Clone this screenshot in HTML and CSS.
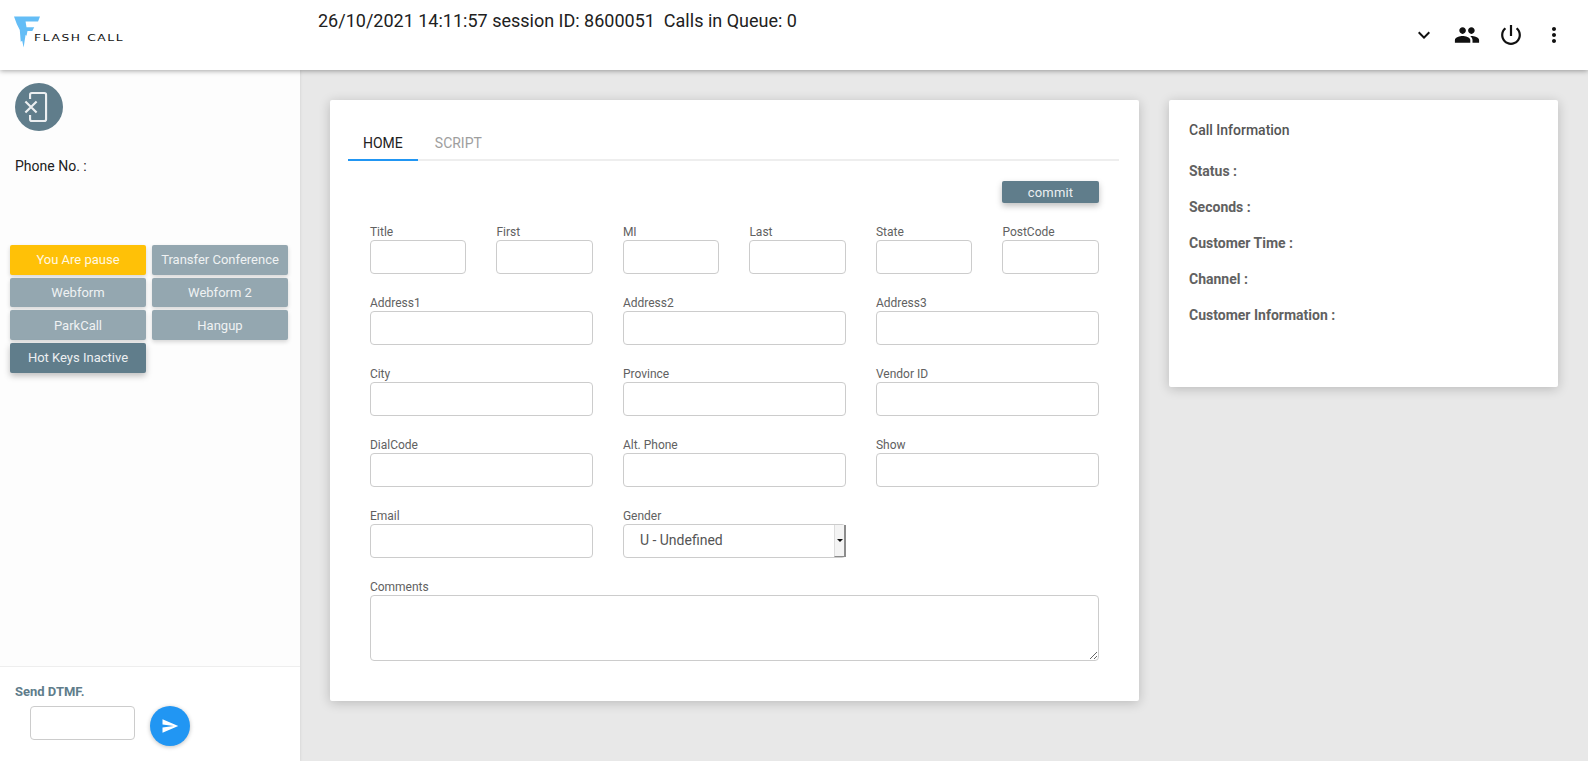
FILE: index.html
```html
<!DOCTYPE html>
<html lang="en">
<head>
<meta charset="utf-8">
<title>Flash Call</title>
<link rel="stylesheet" href="styles.css">
</head>
<body>
<header class="topbar">
  <div class="logo">
    <svg class="logo-mark" viewBox="0 0 27 32" aria-hidden="true"><path fill="#64bdf6" d="M0 0H27L25 5H12L13 11H21L19 15H14L13 20L12 19L10 32L8.500 25L7 26L6 14L3 8z"/></svg>
    <span class="logo-text">FLASH CALL</span>
  </div>
  <div class="status">26/10/2021 14:11:57 session ID: 8600051&nbsp; Calls in Queue: 0</div>
  <nav class="top-icons">
    <svg class="ico" viewBox="0 0 24 24"><path d="M16.590 8.590L12 13.170 7.410 8.590 6 10l6 6 6-6z"/></svg>
    <svg class="ico ico-big" viewBox="0 0 24 24"><path d="M16 11c1.660 0 2.990-1.340 2.990-3S17.660 5 16 5c-1.660 0-3 1.340-3 3s1.340 3 3 3zm-8 0c1.660 0 2.990-1.340 2.990-3S9.660 5 8 5C6.340 5 5 6.340 5 8s1.340 3 3 3zm0 2c-2.330 0-7 1.170-7 3.500V19h14v-2.500c0-2.330-4.670-3.500-7-3.500zm8 0c-.290 0-.620.020-.970.050 1.160.840 1.970 1.970 1.970 3.450V19h6v-2.500c0-2.330-4.670-3.500-7-3.500z"/></svg>
    <svg class="ico ico-big" viewBox="0 0 24 24"><path d="M13 3h-2v10h2V3zm4.830 2.170l-1.420 1.420C17.990 7.860 19 9.810 19 12c0 3.870-3.130 7-7 7s-7-3.130-7-7c0-2.190 1.010-4.140 2.580-5.420L6.170 5.170C4.230 6.820 3 9.260 3 12c0 4.970 4.030 9 9 9s9-4.030 9-9c0-2.740-1.230-5.180-3.170-6.830z"/></svg>
    <svg class="ico" viewBox="0 0 24 24"><path d="M12 8c1.100 0 2-.9 2-2s-.9-2-2-2-2 .9-2 2 .9 2 2 2zm0 2c-1.100 0-2 .9-2 2s.9 2 2 2 2-.9 2-2-.9-2-2-2zm0 6c-1.100 0-2 .9-2 2s.9 2 2 2 2-.9 2-2-.9-2-2-2z"/></svg>
  </nav>
</header>
<div class="layout">
  <aside class="sidebar">
    <div class="side-main">
      <div class="avatar">
        <svg viewBox="0 0 24 24"><path d="M8.300 6V2.800A1.300 1.300 0 0 1 9.600 1.500H19A1.300 1.300 0 0 1 20.300 2.800V21.200A1.300 1.300 0 0 1 19 22.500H9.600A1.300 1.300 0 0 1 8.300 21.200V18M4.800 7.800L13.200 16.200M13.200 7.800L4.800 16.200"/></svg>
      </div>
      <div class="phone">Phone No. :</div>
      <div class="actions">
        <button class="btn btn-amber">You Are pause</button>
        <button class="btn">Transfer Conference</button>
        <button class="btn">Webform</button>
        <button class="btn">Webform 2</button>
        <button class="btn">ParkCall</button>
        <button class="btn">Hangup</button>
        <button class="btn btn-dark">Hot Keys Inactive</button>
      </div>
    </div>
    <div class="side-foot">
      <div class="dtmf-title">Send DTMF.</div>
      <div class="dtmf-row">
        <input class="input dtmf-input" type="text">
        <button class="send" aria-label="Send">
          <svg viewBox="0 0 24 24"><path d="M2.010 21L23 12 2.010 3 2 10l15 2-15 2z"/></svg>
        </button>
      </div>
    </div>
  </aside>
  <main class="content">
    <section class="card card-form">
      <div class="tabs">
        <div class="tab tab-active">HOME</div>
        <div class="tab">SCRIPT</div>
      </div>
      <div class="commit-row"><button class="btn btn-dark btn-commit">commit</button></div>
      <form class="form">
        <label class="field s1"><span>Title</span><input class="input" type="text"></label>
        <label class="field s1"><span>First</span><input class="input" type="text"></label>
        <label class="field s1"><span>MI</span><input class="input" type="text"></label>
        <label class="field s1"><span>Last</span><input class="input" type="text"></label>
        <label class="field s1"><span>State</span><input class="input" type="text"></label>
        <label class="field s1"><span>PostCode</span><input class="input" type="text"></label>
        <label class="field s2"><span>Address1</span><input class="input" type="text"></label>
        <label class="field s2"><span>Address2</span><input class="input" type="text"></label>
        <label class="field s2"><span>Address3</span><input class="input" type="text"></label>
        <label class="field s2"><span>City</span><input class="input" type="text"></label>
        <label class="field s2"><span>Province</span><input class="input" type="text"></label>
        <label class="field s2"><span>Vendor ID</span><input class="input" type="text"></label>
        <label class="field s2"><span>DialCode</span><input class="input" type="text"></label>
        <label class="field s2"><span>Alt. Phone</span><input class="input" type="text"></label>
        <label class="field s2"><span>Show</span><input class="input" type="text"></label>
        <label class="field s2"><span>Email</span><input class="input" type="text"></label>
        <label class="field s2"><span>Gender</span>
          <span class="select-wrap">
            <select class="input select"><option>U - Undefined</option></select>
            <span class="select-btn"></span>
          </span>
        </label>
        <label class="field s6"><span>Comments</span><textarea class="input textarea"></textarea></label>
      </form>
    </section>
    <section class="card card-info">
      <h2 class="info-title">Call Information</h2>
      <div class="info-row">Status :</div>
      <div class="info-row">Seconds :</div>
      <div class="info-row">Customer Time :</div>
      <div class="info-row">Channel :</div>
      <div class="info-row">Customer Information :</div>
    </section>
  </main>
</div>
</body>
</html>
```
FILE: styles.css
```css
* { box-sizing: border-box; }
html, body { margin: 0; height: 100%; overflow: hidden; }
body {
  font-family: Roboto, "Liberation Sans", sans-serif;
  background: #e8e8e8;
  color: #212121;
  display: flex;
  flex-direction: column;
  height: 761px;
}
.topbar {
  height: 70px;
  flex: none;
  background: #fff;
  display: flex;
  position: relative;
  z-index: 2;
  box-shadow: 0 1px 5px rgba(0,0,0,.35);
}
.logo {
  width: 318px;
  flex: none;
  display: flex;
  align-items: flex-start;
  padding: 16px 0 0 14px;
}
.logo-mark { width: 26px; height: 32px; flex: none; }
.logo-text {
  margin: 17px 0 0 -6px;
  font-family: "DejaVu Sans", sans-serif;
  font-size: 9px;
  line-height: 11px;
  letter-spacing: 1.2px;
  color: #111;
  white-space: nowrap;
  transform: scaleX(1.36);
  transform-origin: left center;
}
.status {
  flex: 1;
  font-size: 18px;
  line-height: 21px;
  padding-top: 10px;
  color: #212121;
  white-space: pre;
}
.top-icons {
  display: flex;
  align-items: center;
  gap: 19.300px;
  padding: 0 22px 0 0;
  height: 70px;
}
.ico { width: 24px; height: 24px; fill: #111; display: block; }
.ico-big { transform: scale(1.1); }
.layout { flex: 1; display: flex; min-height: 0; }
.sidebar {
  width: 300px;
  flex: none;
  background: #fdfdfd;
  display: flex;
  flex-direction: column;
  box-shadow: 1px 0 2px rgba(0,0,0,.06);
}
.side-main { flex: 1; padding: 13px 10px 0; }
.avatar {
  width: 48px;
  height: 48px;
  margin-left: 5px;
  border-radius: 50%;
  background: #607d8b;
  display: flex;
  align-items: center;
  justify-content: center;
}
.avatar svg {
  width: 32px;
  height: 32px;
  margin-left: -8px;
  fill: none;
  stroke: #eceff1;
  stroke-width: 1.600;
}
.phone { margin: 27px 0 0 5px; font-size: 14px; line-height: 16px; color: #212121; }
.actions {
  margin-top: 71px;
  display: grid;
  grid-template-columns: 136px 136px;
  column-gap: 6px;
  row-gap: 3px;
  grid-auto-rows: 29.670px;
}
.btn {
  border: 0;
  border-radius: 2px;
  background: #94a7b0;
  color: #eff2f3;
  font-family: inherit;
  font-size: 13px;
  padding: 0;
  white-space: nowrap;
  box-shadow: 0 2px 4px rgba(0,0,0,.16);
}
.btn-amber { background: #ffc107; color: #fff8e1; }
.btn-dark { background: #607d8b; color: #eceff1; box-shadow: 0 3px 6px rgba(0,0,0,.25); }
.side-foot {
  height: 95px;
  flex: none;
  border-top: 1px solid #eeeeee;
  background: #fff;
  padding: 17px 0 0 15px;
}
.dtmf-title { font-size: 13px; line-height: 15px; font-weight: 700; color: #607d8b; }
.dtmf-row { display: flex; align-items: flex-start; margin: 7px 0 0 15px; gap: 15px; }
.input {
  display: block;
  width: 100%;
  height: 34px;
  border: 1px solid #cccccc;
  border-radius: 4px;
  background: #fff;
  outline: 0;
  font-family: inherit;
}
.dtmf-input { width: 105px; }
.send {
  width: 40px;
  height: 40px;
  padding: 0;
  border: 0;
  border-radius: 50%;
  background: #2196f3;
  display: flex;
  align-items: center;
  justify-content: center;
  box-shadow: 0 1px 4px rgba(0,0,0,.25);
}
.send svg { width: 18px; height: 18px; fill: #fff; }
.content {
  flex: 1;
  display: flex;
  align-items: flex-start;
  gap: 30px;
  padding: 30px 30px 0;
  min-width: 0;
}
.card { background: #fff; border-radius: 2px; box-shadow: 0 2px 12px rgba(0,0,0,.2); }
.card-form { width: 809px; height: 601px; flex: none; padding: 22px 20px 0 18px; }
.tabs { display: flex; gap: 2px; height: 39px; border-bottom: 2px solid #eeeeee; }
.tab {
  padding: 0 15px;
  height: 39px;
  font-size: 14px;
  line-height: 43px;
  color: #9e9e9e;
}
.tab-active { color: #212121; border-bottom: 2px solid #2196f3; }
.commit-row { display: flex; justify-content: flex-end; padding: 20px 20px 0 0; }
.btn-commit { width: 97px; height: 22px; font-size: 13px; letter-spacing: .15px; }
.form {
  margin: 21px 20.100px 0 21.900px;
  display: grid;
  grid-template-columns: repeat(6, 1fr);
  column-gap: 30px;
  row-gap: 21px;
}
.field { display: block; font-size: 12px; line-height: 16px; color: #616161; }
.field > span:first-child { display: block; }
.s1 { grid-column: span 1; }
.s2 { grid-column: span 2; }
.s6 { grid-column: span 6; }
.select-wrap { position: relative; display: block; }
.select {
  appearance: none;
  padding: 0 0 2px 16px;
  font-size: 14px;
  color: #555;
}
.select-btn {
  position: absolute;
  top: 1px;
  right: 0;
  width: 12px;
  height: 32px;
  background: #f4f4f4;
  border-right: 2px solid #8c8c8c;
  border-bottom: 1px solid #8c8c8c;
  border-left: 1px solid #ddd;
}
.select-btn::after {
  content: "";
  position: absolute;
  left: 2px;
  top: 14px;
  border: 3px solid transparent;
  border-top: 3px solid #111;
  border-bottom: 0;
}
.textarea { height: 66px; }
.card-info { width: 389px; height: 287px; flex: none; padding: 22px 20px 0; color: #555; }
.info-title { margin: 0; padding-bottom: 5px; font-size: 14px; line-height: 16px; font-weight: 500; color: #555; }
.info-row { margin-top: 20px; font-size: 14px; line-height: 16px; font-weight: 700; color: #616161; }
```
